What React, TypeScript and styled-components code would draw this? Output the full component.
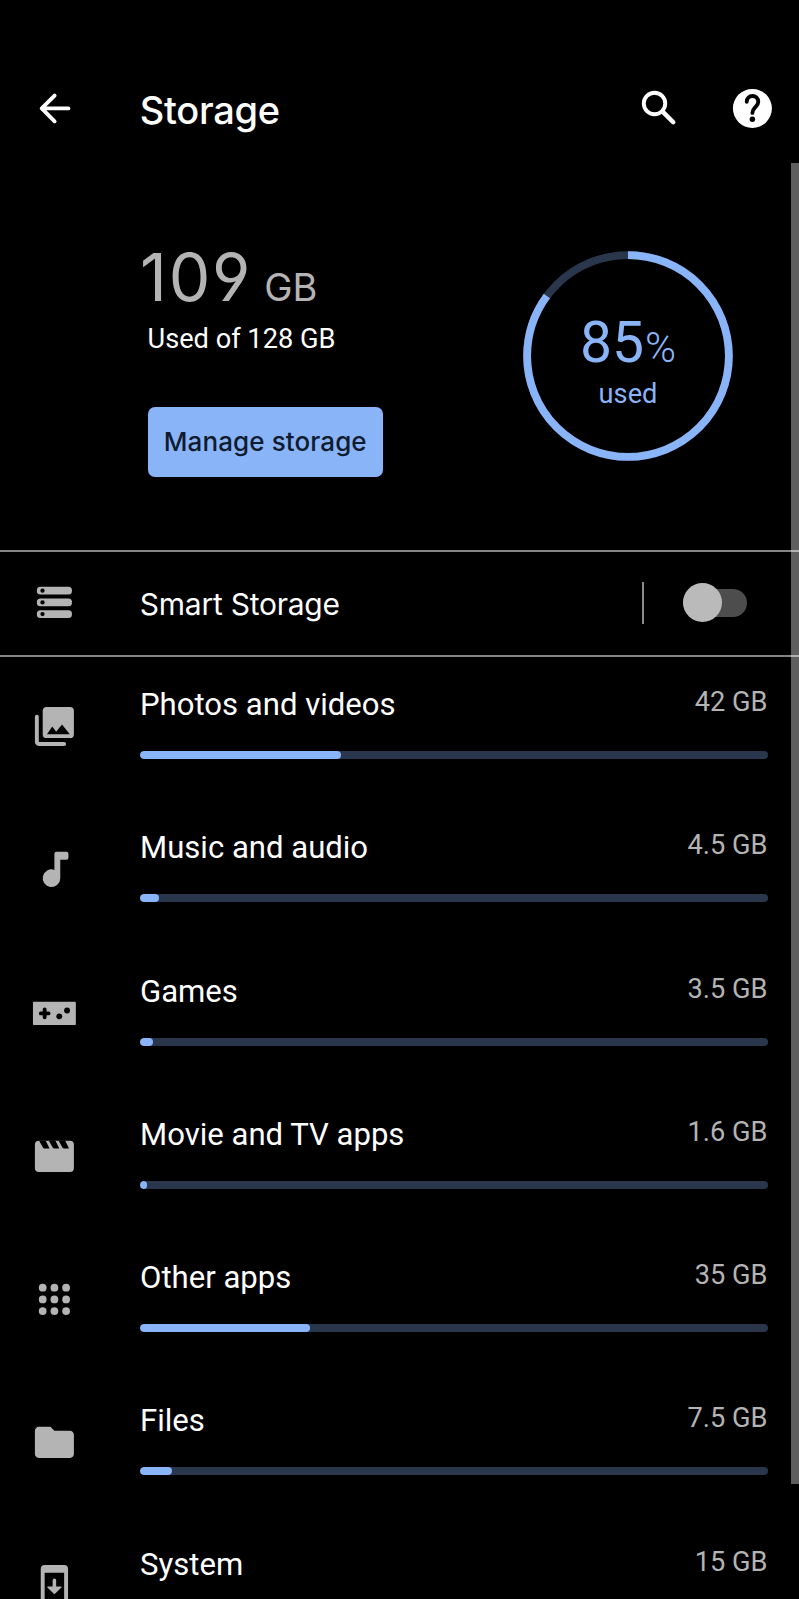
import React, { useState } from "react";
import styled, { createGlobalStyle } from "styled-components";

const GlobalStyle = createGlobalStyle`
  * {
    box-sizing: border-box;
  }
  html,
  body {
    margin: 0;
    background: #000000;
    overflow: hidden;
  }
`;

const Screen = styled.main`
  position: relative;
  width: 799px;
  height: 1599px;
  overflow: hidden;
  background: #000000;
  color: #ffffff;
  font-family: Roboto, "Noto Sans", sans-serif;
`;

const Header = styled.header`
  display: flex;
  align-items: center;
  height: 163px;
  padding: 54.5px 23px 0 31px;
`;

const IconButton = styled.button`
  display: flex;
  padding: 0;
  border: none;
  background: none;
  color: #ffffff;
  cursor: pointer;
`;

const Title = styled.h1`
  flex: 1;
  margin: 3px 0 0 62px;
  font-family: Inter, sans-serif;
  font-weight: 500;
  font-size: 38px;
  line-height: 48px;
  letter-spacing: -0.3px;
`;

const Actions = styled.div`
  display: flex;
  gap: 46px;
`;

const Summary = styled.section`
  display: flex;
  justify-content: space-between;
  height: 387px;
  padding: 74px 66px 0 140px;
`;

const Used = styled.div`
  display: flex;
  flex-direction: column;
  align-items: flex-start;
`;

const UsedSize = styled.div`
  display: flex;
  align-items: baseline;
  gap: 12px;
  height: 80px;
  color: #b4b4b4;
  font-family: Inter, sans-serif;
  font-size: 66px;
  line-height: 80px;
  letter-spacing: 1.8px;
  font-feature-settings: "cv04";
`;

const Unit = styled.span`
  font-size: 38px;
  font-weight: 400;
  letter-spacing: 0;
`;

const UsedOf = styled.div`
  margin: 4px 0 0 7.5px;
  font-size: 27.2px;
  line-height: 36px;
`;

const ManageButton = styled.button`
  width: 235.5px;
  height: 70px;
  margin: 49.5px 0 0 7.5px;
  padding: 0;
  border: none;
  border-radius: 7px;
  background: #8ab4f8;
  color: #0f1b2e;
  font-family: Inter, sans-serif;
  font-weight: 500;
  font-size: 26px;
  letter-spacing: 0.1px;
  cursor: pointer;
`;

const Ring = styled.div`
  display: grid;
  width: 210px;
  height: 210px;
  margin-top: 14px;
  color: #8ab4f8;
  > * {
    grid-area: 1 / 1;
  }
`;

const RingLabel = styled.div`
  padding-top: 60px;
  text-align: center;
`;

const Percent = styled.div`
  height: 65px;
  font-size: 57px;
  line-height: 64px;
  span {
    margin-left: 1px;
    font-size: 42px;
    font-weight: 300;
  }
`;

const RingCaption = styled.div`
  font-size: 27.2px;
  line-height: 36px;
`;

const SmartRow = styled.section`
  display: flex;
  align-items: center;
  height: 107px;
  padding: 0 52px 2px 31px;
  border-top: 2px solid #858585;
  border-bottom: 2px solid #858585;
`;

const SmartIcon = styled.div`
  display: flex;
  color: #b4b4b4;
`;

const SmartLabel = styled.div`
  flex: 1;
  margin: 2px 0 0 62px;
  font-family: Inter, sans-serif;
  font-size: 30px;
  line-height: 40px;
  letter-spacing: -0.25px;
`;

const Separator = styled.div`
  width: 2px;
  height: 42px;
  margin-right: 39.5px;
  background: #8a8a8a;
`;

const Toggle = styled.button<{ $on: boolean }>`
  display: flex;
  align-items: center;
  justify-content: ${({ $on }) => ($on ? "flex-end" : "flex-start")};
  width: 64px;
  height: 28px;
  padding: 0;
  border: none;
  border-radius: 14px;
  background: ${({ $on }) => ($on ? "#3d5275" : "#4d4d4d")};
  cursor: pointer;
`;

const Knob = styled.span<{ $on: boolean }>`
  width: 39px;
  height: 39px;
  flex: none;
  border-radius: 50%;
  background: ${({ $on }) => ($on ? "#8ab4f8" : "#bababa")};
`;

const List = styled.ul`
  margin: 0;
  padding: 0;
  list-style: none;
`;

const Item = styled.li`
  display: flex;
  align-items: flex-start;
  height: 143.25px;
  padding: 23px 31px 0 31px;
`;

const ItemIcon = styled.div`
  display: flex;
  width: 109px;
  padding-top: 23px;
  color: #b4b4b4;
`;

const ItemBody = styled.div`
  flex: 1;
`;

const ItemHead = styled.div`
  display: flex;
  justify-content: space-between;
  height: 71px;
`;

const ItemName = styled.div`
  padding-top: 5px;
  font-size: 31.1px;
  line-height: 40px;
`;

const ItemSize = styled.div`
  padding: 4px 0.5px 0 0;
  color: #b4b4b4;
  font-size: 27.2px;
  line-height: 36px;
`;

const Track = styled.div`
  height: 8px;
  border-radius: 4px;
  background: #2a364b;
  overflow: hidden;
`;

const Fill = styled.div`
  height: 8px;
  border-radius: 4px;
  background: #8ab4f8;
`;

const Scrollbar = styled.div`
  position: absolute;
  top: 163px;
  right: 0;
  width: 8px;
  height: 1321px;
  background: rgba(255, 255, 255, 0.37);
`;

const Svg = ({ children }: { children: React.ReactNode }) => (
  <svg width="46.8" height="46.8" viewBox="0 0 24 24" fill="currentColor">
    {children}
  </svg>
);

const line = {
  fill: "none",
  stroke: "currentColor",
  strokeWidth: 2,
  strokeLinecap: "round" as const,
  strokeLinejoin: "round" as const,
};

const BackIcon = () => (
  <Svg>
    <path {...line} d="M19.2 12H5.7M12.1 5.4L5.5 12l6.6 6.6" />
  </Svg>
);

const SearchIcon = () => (
  <Svg>
    <circle {...line} cx="9.5" cy="9.5" r="5.5" />
    <path {...line} strokeWidth="2.3" d="M13.8 13.8l5.3 5.3" />
  </Svg>
);

const HelpIcon = () => (
  <Svg>
    <circle cx="12" cy="12" r="10" />
    <path
      {...line}
      stroke="#000000"
      d="M9.1 8.6a2.95 2.95 0 0 1 5.9 0c0 1.5-.8 2.1-1.6 2.9-1 1-1.4 1.6-1.4 2.8"
    />
    <circle cx="12" cy="17.6" r="1.4" fill="#000000" />
  </Svg>
);

const StorageIcon = () => (
  <Svg>
    {[6, 12, 18].map((y) => (
      <g key={y}>
        <rect x="3" y={y - 2} width="18" height="4" rx="1.8" />
        <circle cx="5.9" cy={y} r="1.1" fill="#000000" />
      </g>
    ))}
  </Svg>
);

const PhotosIcon = () => (
  <Svg>
    <path d="M2 7a1 1 0 0 1 2 0v13h13a1 1 0 0 1 0 2H4c-1.1 0-2-.9-2-2z" />
    <path
      fillRule="evenodd"
      d="M8 2h12a2 2 0 0 1 2 2v12a2 2 0 0 1-2 2H8a2 2 0 0 1-2-2V4a2 2 0 0 1 2-2zM8.2 16h11.7l-4-5-3 3.8-2-2.8z"
    />
  </Svg>
);

const MusicIcon = () => (
  <Svg>
    <path d="M12 4a1 1 0 0 1 1-1h5.2a1 1 0 0 1 1 1v2a1 1 0 0 1-1 1H15v9.5A4.5 4.5 0 1 1 12 12.26z" />
  </Svg>
);

const GamesIcon = () => (
  <Svg>
    <rect x="1" y="6" width="22" height="12" rx="0.6" />
    <path {...line} stroke="#000000" d="M5 12h4M7 10v4" />
    <circle cx="14.5" cy="13.5" r="1.5" fill="#000000" />
    <circle cx="18.5" cy="10.5" r="1.5" fill="#000000" />
  </Svg>
);

const MovieIcon = () => (
  <Svg>
    <rect x="2" y="4" width="20" height="16" rx="2" />
    {[4.1, 9.1, 14.1].map((x) => (
      <path key={x} fill="#000000" d={`M${x} 3.9h3.4l2 4.1h-2.6q-.5 0-.7-.4z`} />
    ))}
  </Svg>
);

const AppsIcon = () => (
  <Svg>
    {[6, 12, 18].map((y) =>
      [6, 12, 18].map((x) => <circle key={`${x}-${y}`} cx={x} cy={y} r="2" />)
    )}
  </Svg>
);

const FolderIcon = () => (
  <Svg>
    <path d="M10 4H4c-1.1 0-2 .9-2 2v12c0 1.1.9 2 2 2h16c1.1 0 2-.9 2-2V8c0-1.1-.9-2-2-2h-8l-2-2z" />
  </Svg>
);

const SystemIcon = () => (
  <Svg>
    <path
      fillRule="evenodd"
      d="M7 1h10a2 2 0 0 1 2 2v18a2 2 0 0 1-2 2H7a2 2 0 0 1-2-2V3a2 2 0 0 1 2-2zM7 5v14h10V5z"
    />
    <path d="M11.1 8.9a.9.9 0 0 1 1.8 0V12h2.4c.4 0 .5.4.3.6l-3.3 3.2a.5.5 0 0 1-.6 0l-3.3-3.2c-.2-.2-.1-.6.3-.6h2.4z" />
  </Svg>
);

const CIRCLE = 2 * Math.PI * 100.9;

const items = [
  { name: "Photos and videos", size: "42 GB", fill: 201, icon: <PhotosIcon /> },
  { name: "Music and audio", size: "4.5 GB", fill: 19, icon: <MusicIcon /> },
  { name: "Games", size: "3.5 GB", fill: 13, icon: <GamesIcon /> },
  { name: "Movie and TV apps", size: "1.6 GB", fill: 7, icon: <MovieIcon /> },
  { name: "Other apps", size: "35 GB", fill: 169.5, icon: <AppsIcon /> },
  { name: "Files", size: "7.5 GB", fill: 31.5, icon: <FolderIcon /> },
  { name: "System", size: "15 GB", fill: 72, icon: <SystemIcon /> },
];

export default function App() {
  const [smart, setSmart] = useState(false);

  return (
    <Screen>
      <GlobalStyle />
      <Header>
        <IconButton aria-label="Back">
          <BackIcon />
        </IconButton>
        <Title>Storage</Title>
        <Actions>
          <IconButton aria-label="Search">
            <SearchIcon />
          </IconButton>
          <IconButton aria-label="Help">
            <HelpIcon />
          </IconButton>
        </Actions>
      </Header>

      <Summary>
        <Used>
          <UsedSize>
            109 <Unit>GB</Unit>
          </UsedSize>
          <UsedOf>Used of 128 GB</UsedOf>
          <ManageButton>Manage storage</ManageButton>
        </Used>
        <Ring>
          <svg width="210" height="210" viewBox="0 0 210 210" fill="none" strokeWidth="7.8">
            <circle cx="105" cy="105" r="100.9" stroke="#2a364b" />
            <circle
              cx="105"
              cy="105"
              r="100.9"
              stroke="#8ab4f8"
              strokeDasharray={`${CIRCLE * 0.85} ${CIRCLE}`}
              transform="rotate(-90 105 105)"
            />
          </svg>
          <RingLabel>
            <Percent>
              85<span>%</span>
            </Percent>
            <RingCaption>used</RingCaption>
          </RingLabel>
        </Ring>
      </Summary>

      <SmartRow>
        <SmartIcon>
          <StorageIcon />
        </SmartIcon>
        <SmartLabel>Smart Storage</SmartLabel>
        <Separator />
        <Toggle $on={smart} aria-label="Smart Storage" onClick={() => setSmart(!smart)}>
          <Knob $on={smart} />
        </Toggle>
      </SmartRow>

      <List>
        {items.map((item) => (
          <Item key={item.name}>
            <ItemIcon>{item.icon}</ItemIcon>
            <ItemBody>
              <ItemHead>
                <ItemName>{item.name}</ItemName>
                <ItemSize>{item.size}</ItemSize>
              </ItemHead>
              <Track>
                <Fill style={{ width: item.fill }} />
              </Track>
            </ItemBody>
          </Item>
        ))}
      </List>
      <Scrollbar />
    </Screen>
  );
}
